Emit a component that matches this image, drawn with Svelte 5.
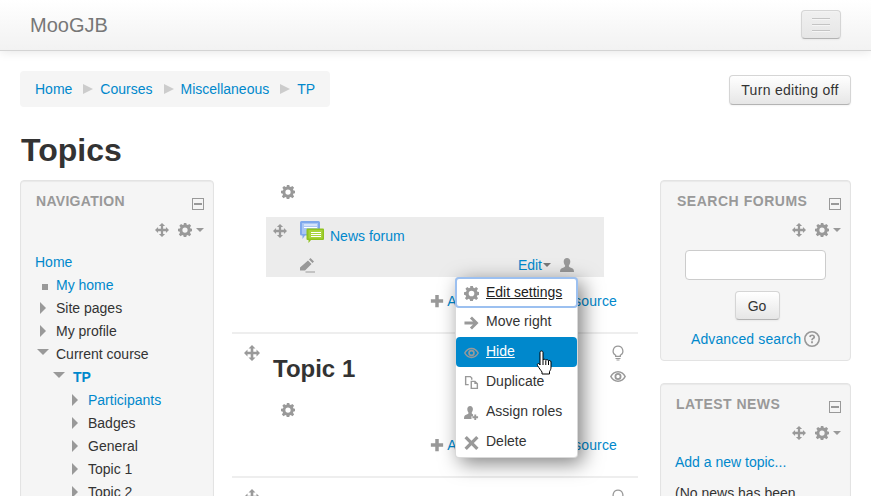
<script>
  const nav = [
    { label: 'My home', kind: 'leaf', indent: 0, link: true },
    { label: 'Site pages', kind: 'closed', indent: 0 },
    { label: 'My profile', kind: 'closed', indent: 0 },
    { label: 'Current course', kind: 'open', indent: 0 },
    { label: 'TP', kind: 'open', indent: 1, current: true },
    { label: 'Participants', kind: 'closed', indent: 2, link: true },
    { label: 'Badges', kind: 'closed', indent: 2 },
    { label: 'General', kind: 'closed', indent: 2 },
    { label: 'Topic 1', kind: 'closed', indent: 2 },
    { label: 'Topic 2', kind: 'closed', indent: 2 }
  ];
  const menu = [
    { label: 'Edit settings', icon: 'gear', cls: 'focus' },
    { label: 'Move right', icon: 'arrow' },
    { label: 'Hide', icon: 'eye', cls: 'active' },
    { label: 'Duplicate', icon: 'dup' },
    { label: 'Assign roles', icon: 'role' },
    { label: 'Delete', icon: 'del' }
  ];
</script>

{#snippet icon(name, size = 14)}
  <svg class="ic" width={size} height={size} viewBox="0 0 16 16" aria-hidden="true">
    {#if name === 'gear'}
      <path d="M6.6 0h2.8l.4 2.2 1.4.6L13 1.5l2 2-1.3 1.8.6 1.4 2.2.4v2.8l-2.2.4-.6 1.4 1.3 1.8-2 2-1.8-1.3-1.4.6-.4 2.2H6.6l-.4-2.2-1.4-.6L3 15.5l-2-2 1.3-1.8-.6-1.4L0 9.9V7.1l2.2-.4.6-1.4L1.5 3.500l2-2 1.800 1.300 1.400-.6zM8 5.500a3 3 0 1 0 0 6 3 3 0 0 0 0-6z" fill-rule="evenodd" transform="translate(0 -.5)"/>
    {:else if name === 'move'}
      <path d="M8 0l3.500 3.500H9.300v3.200h3.200V4.500L16 8l-3.500 3.500V9.300H9.300v3.200h2.200L8 16l-3.500-3.500h2.200V9.300H3.500v2.200L0 8l3.500-3.500v2.200h3.200V3.500H4.500z"/>
    {:else if name === 'plus'}
      <path d="M6 1h4v5h5v4h-5v5H6v-5H1V6h5z"/>
    {:else if name === 'pen'}
      <path d="M11.500 1l3.500 3.500-1.500 1.500L10 2.500zM9 3.500L12.500 7l-6.500 6.500H1V10.500zM6.500 14.500H16V15.500H6.500z"/>
    {:else if name === 'user'}
      <path d="M8 1c2 0 3.300 1.500 3.300 3.500S10.300 8 9.800 8.800c0 1 .8 1.500 2.700 2.200 1.800.7 2.500 1.500 2.500 4H1c0-2.500.7-3.300 2.500-4 1.900-.7 2.700-1.200 2.700-2.200C5.700 8 4.700 6.500 4.700 4.500S6 1 8 1z"/>
    {:else if name === 'arrow'}
      <path d="M8.500 1.500L15.500 8.500l-7 7-2.200-2.200 3.300-3.300H.5V7h9.100L6.300 3.700z"/>
    {:else if name === 'eye'}
      <path d="M8 3c3.600 0 6.400 2.200 8 5.500-1.600 3.300-4.400 5.500-8 5.500s-6.400-2.200-8-5.500C1.600 5.200 4.400 3 8 3zm0 2a3.500 3.500 0 1 0 0 7 3.500 3.500 0 0 0 0-7zm0 1.800a1.700 1.700 0 1 1 0 3.400 1.700 1.700 0 0 1 0-3.400zM8 4.500c-2.600 0-4.900 1.500-6.300 4 1.400 2.500 3.700 4 6.300 4s4.900-1.500 6.300-4c-1.400-2.500-3.700-4-6.300-4z" fill-rule="evenodd"/>
    {:else if name === 'dup'}
      <path d="M1 1h6l2 2v2H7.500V3.500L6.500 2.500h-4v7H5V11H1zM7 6h5l3 3v6H7zm1.500 1.500v6h5V9.500h-2.500V7.500z" fill-rule="evenodd"/>
    {:else if name === 'role'}
      <path d="M6.500 1c1.900 0 3 1.500 3 3.300S8.600 7.500 8.200 8.300c0 .9.500 1.300 1.500 1.700V12H8v3H0c0-2.800.6-3.800 2.300-4.500 1.800-.7 2.500-1.200 2.500-2.200-.5-.8-1.300-2.200-1.300-4S4.600 1 6.500 1zM11 10h2v2h2v2h-2v2h-2v-2H9v-2h2z"/>
    {:else if name === 'del'}
      <path d="M3 1l5 5 5-5 2.500 2.500-5 5 5 5L13 16l-5-5-5 5-2.500-2.500 5-5-5-5z"/>
    {:else if name === 'bulb'}
      <path d="M8 .5a5.500 5.500 0 0 1 3 10.100V12H5v-1.400A5.500 5.500 0 0 1 8 .5zm0 1.300A4.200 4.200 0 0 0 6 9.700l.3.200v.8h3.400v-.8l.3-.2A4.200 4.200 0 0 0 8 1.800zM5.500 13h5v1h-5zm1 1.500h3v1h-3z" fill-rule="evenodd"/>
    {:else if name === 'help'}
      <path d="M8 0a8 8 0 1 1 0 16A8 8 0 0 1 8 0zm0 1.600a6.400 6.400 0 1 0 0 12.800A6.400 6.400 0 0 0 8 1.600zM8.200 3.500c1.700 0 2.900 1 2.900 2.400 0 1.100-.6 1.700-1.400 2.200-.6.400-.8.600-.8 1.200H7.200c0-1.200.4-1.800 1.200-2.300.6-.4.900-.6.900-1.100s-.4-.9-1.100-.9-1.200.4-1.300 1.200L5.100 5.800C5.300 4.400 6.500 3.500 8.200 3.500zM7.100 10.300h1.800v1.900H7.100z" fill-rule="evenodd"/>
    {/if}
  </svg>
{/snippet}

{#snippet blockHead(title, cls)}
  <div class="block-head">
    <h2 class={cls}>{title}</h2>
    <span class="collapse"></span>
  </div>
  <div class="block-tools">
    {@render icon('move', 14)}
    <span class="gear-caret">{@render icon('gear', 14)}<i class="caret"></i></span>
  </div>
{/snippet}

{#snippet addLine()}
  <div class="add-line">
    {@render icon('plus', 14)}<a href="#a">Add an activity or resource</a>
  </div>
{/snippet}

<div class="page">
  <header class="navbar">
    <span class="brand">MooGJB</span>
    <button class="toggle" aria-label="Menu"><i></i><i></i><i></i></button>
  </header>

  <div class="crumb-row">
    <nav class="crumbs">
      <a href="#a">Home</a><span class="sep"></span>
      <a href="#a">Courses</a><span class="sep"></span>
      <a href="#a">Miscellaneous</a><span class="sep"></span>
      <a href="#a">TP</a>
    </nav>
    <button class="btn turn">Turn editing off</button>
  </div>

  <h1>Topics</h1>

  <main class="columns">
    <aside class="block nav-block">
      {@render blockHead('NAVIGATION', 'nav-title')}
      <ul class="tree">
        <li class="root"><a href="#a">Home</a></li>
        {#each nav as n}
          <li class="indent-{n.indent}">
            <span class="mark {n.kind}"></span>
            {#if n.current}
              <b class="current">{n.label}</b>
            {:else if n.link}
              <a href="#a">{n.label}</a>
            {:else}
              {n.label}
            {/if}
          </li>
        {/each}
      </ul>
    </aside>

    <section class="center">
      <div class="sec-zero">
        <div class="sum-gear">{@render icon('gear', 14)}</div>
        <div class="activity">
          <div class="act-top">
            <span class="act-move">{@render icon('move', 14)}</span>
            <svg class="forum" width="25" height="25" viewBox="0 0 25 25" aria-hidden="true">
              <path d="M1.500 1h17a1.500 1.500 0 0 1 1.500 1.500V14a1.500 1.500 0 0 1-1.500 1.500H5L2.500 19V15.500h-1A1.500 1.500 0 0 1 0 14V2.500A1.500 1.500 0 0 1 1.500 1z" fill="#7fa8ec" />
              <path d="M2 3h16v11H2z" fill="#a9c6f5"/>
              <path d="M4 4.500h13v1H4zM4 7h13v1H4z" fill="#fff"/>
              <path d="M7.500 8.500h15.500a1 1 0 0 1 1 1V19a1 1 0 0 1-1 1H11l-2.500 3v-3h-1a1 1 0 0 1-1-1V9.500a1 1 0 0 1 1-1z" fill="#8fc31f"/>
              <path d="M8.500 10h14v8.500h-14z" fill="#a8d43a"/>
              <path d="M11 12h10v1H11zM11 14h10v1H11zM11 16h10v1H11z" fill="#fff"/>
            </svg>
            <a href="#a" class="forum-link">News forum</a>
          </div>
          <div class="act-bottom">
            <span class="pen">{@render icon('pen', 16)}</span>
            <span class="edit-wrap"><a href="#a">Edit</a><i class="caret"></i></span>
            <span class="user">{@render icon('user', 16)}</span>
          </div>
        </div>
        {@render addLine()}
      </div>

      <div class="topic">
        <div class="topic-main">
          <span class="t-move">{@render icon('move', 16)}</span>
          <div class="t-body">
            <h3>Topic 1</h3>
            <div class="t-gear">{@render icon('gear', 14)}</div>
          </div>
          <div class="t-right">
            {@render icon('bulb', 16)}
            {@render icon('eye', 16)}
          </div>
        </div>
        {@render addLine()}
      </div>

      <div class="topic next">
        <div class="topic-main">
          <span class="t-move">{@render icon('move', 16)}</span>
          <div class="t-body"></div>
          <div class="t-right">{@render icon('bulb', 16)}</div>
        </div>
      </div>

      <ul class="menu">
        {#each menu as m}
          <li class={m.cls}>
            <span class="m-ic">{@render icon(m.icon, 15)}</span>
            <span class="m-label">{m.label}</span>
          </li>
        {/each}
      </ul>
      <svg class="hand" width="17" height="25" viewBox="0 0 17 25" aria-hidden="true">
        <path d="M5.500 1c1 0 1.500.7 1.500 1.500V10c.3-1 2.500-1 2.800.2.500-.8 2.400-.7 2.700.5.600-.5 2.500-.3 2.500 1.300V17c0 2-.5 3-1.500 4.500V24H6v-2c-1-1.500-3-4-4.500-6.500-.8-1.400.8-2.700 2-1.500L4 15V2.500C4 1.700 4.500 1 5.500 1z" fill="#fff" stroke="#000" stroke-width="1" stroke-linejoin="round"/>
        <path d="M7 10v5M9.800 10.500V15M12.500 11v4" stroke="#000" fill="none"/>
      </svg>
    </section>

    <aside class="right">
      <div class="block search">
        {@render blockHead('SEARCH FORUMS', 'search-title')}
        <div class="search-body">
          <input type="text" aria-label="Search" />
          <button class="btn go">Go</button>
          <div class="adv"><a href="#a">Advanced search</a>{@render icon('help', 16)}</div>
        </div>
      </div>
      <div class="block news">
        {@render blockHead('LATEST NEWS', 'news-title')}
        <div class="news-body">
          <a href="#a">Add a new topic...</a>
          <p>(No news has been posted yet)</p>
        </div>
      </div>
    </aside>
  </main>
</div>

<style>
  :global(body) { margin: 0; background: #fff; }
  .page {
    width: 871px; height: 496px; overflow: hidden; position: relative;
    font-family: "Liberation Sans", Arial, sans-serif; font-size: 14px; line-height: 20px; color: #333;
  }
  a { color: #0088cc; text-decoration: none; }
  .ic { fill: #999; display: block; flex: none; }

  .navbar {
    height: 50px; box-sizing: content-box; border-bottom: 1px solid #d4d4d4;
    background: linear-gradient(#ffffff, #f2f2f2);
    box-shadow: 0 1px 10px rgba(0,0,0,.1);
    display: flex; align-items: center; justify-content: space-between;
    padding: 0 30px;
  }
  .brand { font-size: 20px; color: #777; }
  .toggle {
    width: 40px; height: 29px; padding: 0; box-sizing: border-box; margin-top: -1px;
    border: 1px solid #d5d5d5; border-bottom-color: #b3b3b3; border-radius: 4px;
    background: linear-gradient(#f0f0f0, #e6e6e6); display: flex; flex-direction: column; align-items: center; justify-content: center; gap: 4px;
    box-shadow: inset 0 1px 0 rgba(255,255,255,.2), 0 1px 2px rgba(0,0,0,.05);
  }
  .toggle i { display: block; width: 18px; height: 2px; background: #f5f5f5; border-top: 1px solid #c4c4c4; box-sizing: border-box; }

  .crumb-row {
    display: flex; justify-content: space-between; align-items: flex-start;
    margin: 20px 20px 0;
  }
  .crumbs {
    background: #f5f5f5; border-radius: 4px; height: 36px; padding: 0 15px;
    display: flex; align-items: center;
  }
  .sep { width: 0; height: 0; border: 5px solid transparent; border-left: 10px solid #ccc; border-right: 0; margin: 0 7px 0 11px; }
  .btn {
    font: 14px/20px "Liberation Sans", Arial, sans-serif; color: #333;
    background: linear-gradient(#ffffff, #e6e6e6);
    border: 1px solid #d5d5d5; border-bottom-color: #b3b3b3; border-radius: 4px;
    box-shadow: inset 0 1px 0 rgba(255,255,255,.2), 0 1px 2px rgba(0,0,0,.05);
  }
  .turn { width: 122px; height: 30px; padding: 0; margin-top: 4px; letter-spacing: .3px; }

  h1 { font-size: 32px; line-height: 40px; margin: 23px 0 10px 21px; font-weight: bold; color: #333; }

  .columns { display: grid; grid-template-columns: 194px 446px 191px; margin-left: 20px; column-gap: 0; }
  .block {
    background: #f5f5f5; border: 1px solid #e3e3e3; border-radius: 4px; box-sizing: border-box;
    box-shadow: inset 0 1px 1px rgba(0,0,0,.05);
  }
  .block-head { display: flex; justify-content: space-between; padding: 10px 9px 0 15px; height: 20px; box-sizing: content-box; }
  .block-head h2 { margin: 0; font-size: 14px; line-height: 20px; font-weight: bold; color: #999; }
  .nav-title { letter-spacing: .3px; }
  .block-head .search-title { margin-left: 1px; letter-spacing: .52px; }
  .block-head .news-title { letter-spacing: .45px; }
  .collapse {
    width: 12px; height: 12px; box-sizing: border-box; border: 1px solid #999;
    margin-top: 7px; background: linear-gradient(#999,#999) center/8px 2px no-repeat, #f5f5f5;
  }
  .block-tools { display: flex; justify-content: flex-end; align-items: center; gap: 9px; padding: 12px 9px 0 0; height: 14px; box-sizing: content-box; }
  .gear-caret { display: flex; align-items: center; gap: 4px; }
  .caret { display: inline-block; width: 0; height: 0; border: 4px solid transparent; border-top-color: #999; border-bottom: 0; }

  .nav-block { width: 194px; height: 340px; }
  .tree { list-style: none; margin: 14px 0 0; padding: 0 0 0 14px; }
  .tree li { height: 23px; line-height: 23px; white-space: nowrap; position: relative; padding-left: 21px; }
  .tree li.root { padding-left: 0; }
  .tree li.indent-1 { padding-left: 38px; }
  .tree li.indent-2 { padding-left: 53px; }
  .current { color: #0088cc; }
  .mark { position: absolute; top: 0; left: 0; }
  .mark.leaf { left: 7px; top: 10px; width: 6px; height: 6px; background: #999; }
  .mark.closed { left: 5px; top: 5px; border: 6px solid transparent; border-left: 6px solid #999; border-right: 0; }
  .mark.open { left: 2px; top: 6px; border: 6px solid transparent; border-top: 6px solid #999; border-bottom: 0; }
  .indent-1 .mark.open { left: 18px; }
  .indent-2 .mark.closed { left: 37px; }

  .center { position: relative; margin-left: 18px; width: 406px; }
  .sum-gear { padding: 5px 0 0 49px; height: 37px; box-sizing: border-box; }
  .activity { margin-left: 34px; width: 338px; height: 60px; background: #ececec; display: flex; flex-direction: column; justify-content: space-between; box-sizing: border-box; }
  .act-top { display: flex; align-items: flex-start; height: 36px; position: relative; }
  .act-move { margin: 7px 0 0 7px; }
  .forum { margin: 3px 0 0 13px; }
  .forum-link { margin: 9px 0 0 5px; }
  .act-bottom { display: flex; align-items: center; height: 24px; padding: 0 29px 0 33px; }
  .edit-wrap { margin-left: auto; display: flex; align-items: center; gap: 1px; margin-right: 8px; }
  .edit-wrap .caret { border-top-color: #777; }
  .add-line { display: flex; align-items: center; justify-content: flex-end; gap: 3px; padding-right: 21px; height: 20px; }
  .add-line a { letter-spacing: .15px; }
  .sec-zero .add-line { margin-top: 14px; }
  .sec-zero { height: 152px; }
  .topic { border-top: 2px solid #eee; height: 142px; box-sizing: content-box; }
  .topic-main { display: flex; height: 88px; position: relative; }
  .t-move { padding: 11px 0 0 12px; }
  .t-body { flex: 1; padding-left: 13px; }
  h3 { font-size: 24px; line-height: 40px; margin: 15px 0 0; font-weight: bold; color: #333; }
  .t-gear { padding: 14px 0 0 8px; }
  .t-right { display: flex; flex-direction: column; align-items: center; gap: 7px; padding: 11px 12px 0 0; }
  .topic .add-line { margin-top: 13px; }

  .menu {
    position: absolute; left: 223px; top: 97px; width: 123px; height: 181px; margin: 0; padding: 0; list-style: none;
    background: #fff; border-radius: 4px; box-sizing: border-box; border: 1px solid rgba(0,0,0,.15);
    box-shadow: 5px 5px 20px rgba(0,0,0,.5);
    z-index: 3;
  }
  .menu li { height: 30px; display: flex; align-items: center; position: relative; padding-left: 30px; color: #333; margin-top: 0; }
  .m-ic { position: absolute; left: 8px; top: 8px; }
  .m-label { position: relative; top: -1px; }
  .menu li.focus { outline: 2px solid #9cc0f0; outline-offset: -1px; border-radius: 3px; height: 29px; }
  .menu li.focus .m-label { text-decoration: underline; color: #222; }
  .menu li.active { background: #0088cc; border-radius: 4px; color: #fff; }
  .menu li.active .m-label { text-decoration: underline; }
  .hand { position: absolute; left: 304px; top: 170px; z-index: 4; }

  .right { width: 191px; display: flex; flex-direction: column; gap: 22px; }
  .search { height: 181px; }
  .search-body { display: flex; flex-direction: column; align-items: center; padding-top: 13px; }
  .search-body input { width: 141px; height: 30px; box-sizing: border-box; border: 1px solid #ccc; border-radius: 4px; background: #fff; margin: 0 0 0 -1px; padding: 0; }
  .go { width: 45px; height: 29px; padding: 0; margin: 11px 0 0 3px; }
  .adv { display: flex; align-items: center; gap: 3px; margin-top: 9px; }
  .adv a { letter-spacing: .13px; }
  .news { height: 200px; }
  .news-body { padding: 12px 14px 0 14px; }
  .news-body p { margin: 11px 0 0; }
</style>
